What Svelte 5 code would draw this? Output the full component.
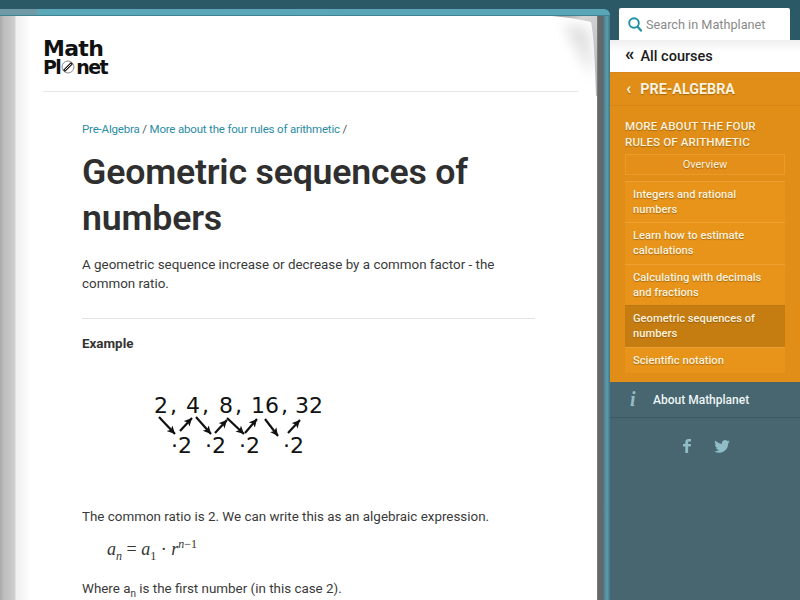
<script>
  const links = [
    { label: 'Integers and rational numbers' },
    { label: 'Learn how to estimate calculations' },
    { label: 'Calculating with decimals and fractions' },
    { label: 'Geometric sequences of numbers', active: true },
    { label: 'Scientific notation' }
  ];
  const top = [['2', 15], ['4', 47], ['8', 80], ['16', 112], ['32', 156]];
  const bottom = [32, 66, 100, 144];
  const arrows = [
    [20, 38, 36, 55], [41, 52, 53, 39], [57, 38, 72, 55], [76, 54, 88, 41],
    [88, 39, 105, 55], [106, 54, 118, 40], [126, 40, 139, 57], [149, 54, 161, 41]
  ];
</script>

<div class="screen">
  <div class="book">
    <div class="topband"></div>
    <div class="bookbody">
      <div class="spine"></div>
      <main class="sheet">
        <svg class="curl" width="70" height="80" viewBox="0 0 70 80" aria-hidden="true">
          <defs>
            <linearGradient id="fold" x1="0" y1="0" x2="0.4" y2="1">
              <stop offset="0" stop-color="#8f8f8f" />
              <stop offset="0.25" stop-color="#d2d2d2" />
              <stop offset="1" stop-color="#b9b9b9" />
            </linearGradient>
            <filter id="soft" x="-40%" y="-40%" width="180%" height="180%"><feGaussianBlur stdDeviation="7" /></filter>
          </defs>
          <path d="M36 8 62 12 66 62Z" fill="#000" opacity=".13" filter="url(#soft)" />
          <path d="M25 0 70 0 70 80 69 80C68 48 67 22 64 6 52 3 38 1 25 0Z" fill="url(#fold)" />
        </svg>
        <header class="logoarea">
          <div class="logo">
            <span class="l1">Math</span>
            <span class="l2">Pl<svg class="planet" width="14" height="14" viewBox="0 0 14 14"><circle cx="7" cy="7" r="6" fill="#fff" stroke="#8a8a8a" stroke-width="1" /><path d="M3 11 11 3" stroke="#222" stroke-width="3" /><path d="M4 10 10 4" stroke="#ddd" stroke-width="1" /></svg>net</span>
          </div>
        </header>
        <article class="content">
          <nav class="crumbs"><a href="#a">Pre-Algebra</a> / <a href="#b">More about the four rules of arithmetic</a> /</nav>
          <h1>Geometric sequences of numbers</h1>
          <p class="lead">A geometric sequence increase or decrease by a common factor - the common ratio.</p>
          <hr />
          <p class="example"><b>Example</b></p>
          <svg class="seq" width="200" height="90" viewBox="0 0 200 90" role="img" aria-label="2, 4, 8, 16, 32 multiplied by 2">
            <defs>
              <marker id="ah" markerUnits="userSpaceOnUse" markerWidth="9" markerHeight="9" refX="8" refY="4" orient="auto"><path d="M0 0 8 4 0 8 2 4Z" fill="#111" /></marker>
            </defs>
            <g class="num">
              {#each top as [t, x], i}
                <text {x} y="34">{t}{#if i < 4}<tspan dx="2">,</tspan>{/if}</text>
              {/each}
              {#each bottom as x}
                <text {x} y="74">·2</text>
              {/each}
            </g>
            <g class="arr">
              {#each arrows as [x1, y1, x2, y2]}
                <line {x1} {y1} {x2} {y2} />
              {/each}
            </g>
          </svg>
          <p class="ratio">The common ratio is 2. We can write this as an algebraic expression.</p>
          <p class="formula"><i>a<sub>n</sub></i> = <i>a</i><sub>1</sub> · <i>r</i><sup><i>n</i>−1</sup></p>
          <p class="where">Where a<sub>n</sub> is the first number (in this case 2).</p>
        </article>
      </main>
      <div class="edge"></div>
    </div>
  </div>

  <aside class="side">
    <div class="searchwrap">
      <div class="search">
        <svg width="14" height="15" viewBox="0 0 14 15"><circle cx="6" cy="6" r="4.8" fill="none" stroke="#1f8fa8" stroke-width="1.9" /><path d="M9.6 9.8 13 13.6" stroke="#1f8fa8" stroke-width="2.2" stroke-linecap="round" /></svg>
        <span>Search in Mathplanet</span>
      </div>
    </div>
    <div class="allcourses"><span class="dbl">«</span><span>All courses</span></div>
    <div class="orange">
      <div class="pre"><span class="chev">‹</span><span>PRE-ALGEBRA</span></div>
      <div class="section">
        <div class="sectitle">MORE ABOUT THE FOUR RULES OF ARITHMETIC</div>
        <div class="overview">Overview</div>
        <ul>
          {#each links as l}
            <li class:active={l.active}>{l.label}</li>
          {/each}
        </ul>
      </div>
    </div>
    <div class="about"><span class="info">i</span><span>About Mathplanet</span></div>
    <div class="social">
      <svg width="8" height="14" viewBox="0 0 8 14"><path d="M2.3 14V7.600H0V5h2.300V3.200C2.300 1 3.600 0 5.400 0H8v2.600H6.300c-.9 0-1.200.4-1.200 1.100V5H8l-.4 2.600H5.100V14Z" fill="#8fbcc6" /></svg>
      <svg width="16" height="13" viewBox="0 0 24 20"><path d="M24 2.400c-.9.4-1.800.7-2.800.8 1-.6 1.800-1.600 2.200-2.700-1 .6-2 1-3.100 1.200A4.900 4.900 0 0 0 11.900 6.100C7.800 5.900 4.200 3.900 1.700.9c-1.300 2.300-.6 5.100 1.500 6.500-.8 0-1.500-.2-2.200-.6 0 2.300 1.600 4.400 3.900 4.900-.7.200-1.500.2-2.200.1.600 2 2.400 3.400 4.600 3.400A9.900 9.900 0 0 1 0 17.300 13.900 13.900 0 0 0 21.500 5c1-.7 1.800-1.600 2.500-2.600Z" fill="#8fbcc6" /></svg>
    </div>
  </aside>
</div>

<style>
  :global(body) { margin: 0; }
  .screen {
    width: 800px; height: 600px; overflow: hidden; display: flex;
    background: #2b5a66; font-family: Roboto, "Noto Sans", sans-serif;
  }
  .book { width: 610px; flex: none; display: flex; flex-direction: column; padding-top: 9px; box-sizing: border-box; }
  .topband {
    height: 6px; flex: none; border-radius: 0 6px 0 0;
    background: linear-gradient(90deg, #6f9aa5 0, #6f9aa5 36px, #5ba8b9 38px, #5aa5b6 100%);
    border-bottom: 1px solid #3f8394;
  }
  .bookbody { flex: 1; display: flex; min-height: 0; }
  .spine {
    width: 17px; flex: none;
    background: linear-gradient(90deg, #a9a9a9 0, #bdbdbd 4px, #c9c9c9 12px, #d0d0d0 15px, #f2f2f2 16px);
  }
  .sheet {
    position: relative; width: 580px; flex: none; background: linear-gradient(90deg, #f0f0f0 0, #fff 14px);
    box-sizing: border-box; padding-left: 26px;
  }
  .curl { position: absolute; right: 0; top: 0; }
  .edge {
    flex: 1;
    background: linear-gradient(90deg, #8b8b8b 0, #63686b 1px, #63686b 6px, #4a8494 7px, #5f9cac 10px, #3f7685 13px, #3d6873 100%);
  }
  .logoarea { width: 535px; height: 75px; border-bottom: 1px solid #e6e6e6; }
  .logo { display: flex; flex-direction: column; padding-top: 24px; font-family: "DejaVu Sans", sans-serif; font-weight: 700; color: #111; line-height: 18px; }
  .l1 { font-size: 22px; letter-spacing: -.7px; }
  .l2 { font-size: 19px; letter-spacing: -1.6px; display: flex; align-items: center; }
  .planet { margin: 0 1px; }
  .content { padding: 29px 0 0 39px; width: 453px; color: #333; }
  .crumbs { font-size: 11.5px; letter-spacing: -.18px; line-height: 16px; color: #555; height: 16px; white-space: nowrap; }
  .crumbs a { color: #2b8ca5; text-decoration: none; }
  h1 { margin: 12px 0 0; font-size: 35.7px; line-height: 46px; font-weight: 600; color: #2f2f2f; letter-spacing: -0.2px; }
  .lead { margin: 14px 0 0; font-size: 13.4px; line-height: 19px; color: #3a3a3a; }
  hr { border: 0; border-top: 1px solid #e3e3e3; margin: 25px 0 0; }
  .example { margin: 16px 0 0; font-size: 13.4px; line-height: 18px; color: #333; }
  .seq { display: block; margin: 26px 0 0 57px; }
  .num text { font-family: "DejaVu Sans", sans-serif; font-size: 22px; fill: #111; }
  .arr line { stroke: #111; stroke-width: 2.2; marker-end: url(#ah); }
  .ratio { margin: 38px 0 0; font-size: 13.4px; line-height: 20px; color: #3a3a3a; white-space: nowrap; }
  .formula { margin: 10px 0 0 25px; font-family: "Liberation Serif", serif; font-size: 18px; line-height: 24px; color: #333; white-space: nowrap; }
  .formula sub, .formula sup { font-size: 12px; line-height: 0; }
  .where { margin: 18px 0 0; font-size: 13.4px; line-height: 20px; color: #3a3a3a; }
  .where sub { font-size: 10px; line-height: 0; }
  .side { width: 190px; flex: none; display: flex; flex-direction: column; background: #47666f; }
  .searchwrap { background: #2b5a66; padding: 8px 10px 0 9px; height: 32px; }
  .search {
    height: 32px; background: #fff; border-radius: 2px 2px 0 0; display: flex; align-items: center; gap: 4px;
    padding-left: 9px; font-size: 12.7px; color: #8a8a8a;
  }
  .allcourses {
    height: 32px; background: linear-gradient(#efefef, #fff 12px); display: flex; align-items: center; gap: 6px; padding-left: 15px;
    font-size: 14.5px; font-weight: 500; color: #1c1c1c; box-sizing: border-box;
  }
  .dbl { font-size: 19px; line-height: 26px; margin-top: -4px; font-weight: 700; }
  .orange { background: #e18e18; height: 310px; box-sizing: border-box; border-top: 1px solid #d6861a; color: #fdf3df; text-shadow: 0 1px 1px rgba(120,70,0,.55); }
  .pre { height: 32px; border-bottom: 1px solid #d8861a; display: flex; align-items: center; gap: 9px; padding-left: 16px; font-size: 14.3px; font-weight: 700; }
  .chev { font-size: 17px; line-height: 18px; margin-top: -3px; }
  .section { padding: 13px 15px 0; }
  .sectitle { font-size: 11.6px; font-weight: 500; line-height: 15.5px; letter-spacing: .1px; }
  .overview { margin-top: 4px; height: 19px; border: 1px solid #eb9a2b; background: #e38f1a; font-size: 11px; line-height: 19px; text-align: center; }
  ul { list-style: none; margin: 6px 0 0; padding: 0; background: #e8941a; }
  li { padding: 5px 8px 5.4px; font-size: 11.2px; font-weight: 500; line-height: 15px; border-top: 1px solid #efa033; }
  li.active { background: #c57d12; border-top-color: #bb7610; }
  .about { height: 35px; display: flex; align-items: center; border-bottom: 1px solid #3c5a63; color: #eef4f5; font-size: 12px; font-weight: 500; }
  .info { width: 43px; padding-left: 20px; box-sizing: border-box; font-family: "Liberation Serif", serif; font-weight: 700; font-style: italic; font-size: 20px; color: #93bcc6; }
  .social { display: flex; align-items: center; gap: 23px; padding: 21px 0 0 73px; }
</style>
